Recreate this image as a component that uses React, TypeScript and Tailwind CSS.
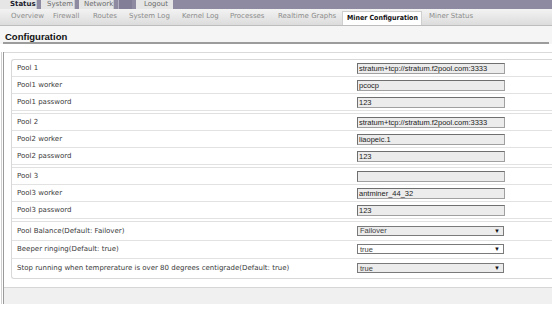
import React from "react";

const topTabs = [
  { label: "Status", cls: "w-[37px] pl-[10px] font-bold text-[#1d1d2e]" },
  { label: "System", cls: "w-[34px] pl-[6px] text-[#6b6b6b]" },
  { label: "Network", cls: "w-[35px] pl-[5px] text-[#6b6b6b]" },
];

const subTabs = [
  { label: "Overview", cls: "w-[42px]" },
  { label: "Firewall", cls: "w-[40px]" },
  { label: "Routes", cls: "w-[36px]" },
  { label: "System Log", cls: "w-[53px]" },
  { label: "Kernel Log", cls: "w-[48px]" },
  { label: "Processes", cls: "w-[48px]" },
  { label: "Realtime Graphs", cls: "w-[69px]" },
];

type Row = { label: string; value: string; kind: "input" | "select"; white?: boolean };

const groups: Row[][] = [
  [
    { label: "Pool 1", value: "stratum+tcp://stratum.f2pool.com:3333", kind: "input" },
    { label: "Pool1 worker", value: "pcocp", kind: "input" },
    { label: "Pool1 password", value: "123", kind: "input" },
  ],
  [
    { label: "Pool 2", value: "stratum+tcp://stratum.f2pool.com:3333", kind: "input" },
    { label: "Pool2 worker", value: "liaopeic.1", kind: "input" },
    { label: "Pool2 password", value: "123", kind: "input" },
  ],
  [
    { label: "Pool 3", value: "", kind: "input" },
    { label: "Pool3 worker", value: "antminer_44_32", kind: "input" },
    { label: "Pool3 password", value: "123", kind: "input" },
  ],
  [
    { label: "Pool Balance(Default: Failover)", value: "Failover", kind: "select" },
    { label: "Beeper ringing(Default: true)", value: "true", kind: "select", white: true },
    {
      label: "Stop running when temprerature is over 80 degrees centigrade(Default: true)",
      value: "true",
      kind: "select",
    },
  ],
];

function Field({ row }: { row: Row }) {
  if (row.kind === "input") {
    return (
      <input
        readOnly
        value={row.value}
        className="w-[148px] h-[11px] p-0 pl-[1px] border border-[#6f6f6f] border-b-[#a0a0a0] border-r-[#a0a0a0] bg-[#ececec] text-[7.5px] leading-[9px] text-[#222] font-['Liberation_Sans',Arial,sans-serif] outline-none"
      />
    );
  }
  return (
    <div
      className={`w-[147px] h-[10px] flex items-center justify-between border border-[#7a7a7a] pl-[2px] pr-[3px] text-[7.5px] leading-none text-[#444] font-['Liberation_Sans',Arial,sans-serif] ${
        row.white ? "bg-white" : "bg-[#ececec]"
      }`}
    >
      <span>{row.value}</span>
      <span className="text-[6px] text-[#111]">▼</span>
    </div>
  );
}

export default function App() {
  return (
    <div className="w-[552px] h-[316px] overflow-hidden bg-white font-['DejaVu_Sans',Verdana,sans-serif] text-[7px]">
      {/* top menu */}
      <div className="h-[9px] bg-[#8e8aa2] flex items-start overflow-hidden">
        {topTabs.map((t) => (
          <div
            key={t.label}
            className={`h-[9px] mr-[4px] bg-[#e6e6e6] border-r border-[#c9c9c9] leading-[8px] text-[7px] ${t.cls}`}
          >
            {t.label}
          </div>
        ))}
        <div className="h-[9px] w-[14px] bg-[#827e98] border-l border-[#b3b0c2]" />
        <div className="h-[9px] w-[37px] ml-[4px] pl-[8px] bg-[#e6e6e6] leading-[8px] text-[7px] text-[#6b6b6b]">
          Logout
        </div>
      </div>

      {/* sub menu */}
      <div className="h-[17px] bg-gradient-to-b from-[#f3f3f3] to-[#dcdcdc] border-b border-[#bdbdbd] flex items-end pl-[6px] text-[#8c8c8c]">
        {subTabs.map((t) => (
          <div key={t.label} className={`h-[16px] pl-[5px] leading-[15px] whitespace-nowrap ${t.cls}`}>
            {t.label}
          </div>
        ))}
        <div className="h-[14px] w-[80px] pl-[4px] bg-white border-x border-t border-[#cfcfcf] leading-[13px] font-bold text-[#111] whitespace-nowrap font-['DejaVu_Sans_Condensed','DejaVu_Sans',sans-serif]">
          Miner Configuration
        </div>
        <div className="h-[16px] pl-[7px] leading-[15px] whitespace-nowrap">Miner Status</div>
      </div>

      {/* heading */}
      <div className="bg-[#f5f5f5] pt-[6px] px-[3px]">
        <div className="border-b-2 border-[#9c9c9c] pl-[2px] h-[12px] leading-[10px] text-[9.5px] font-bold text-[#111] font-['Liberation_Sans',Arial,sans-serif]">
          Configuration
        </div>
      </div>

      {/* content */}
      <div className="mt-[8px] ml-[1px] border-l border-[#cfcfcf] pl-[1px]">
        <div className="border-l border-[#9a9a9a]">
          <div className="border-t border-[#dadada] pt-[6px] pl-[7px] pb-[8px]">
            <div className="border border-r-0 border-[#d8d8d8] rounded-l-[3px] text-[#3a3a3a]">
              {groups.map((g, gi) => (
                <div
                  key={gi}
                  className={gi === 0 ? "" : "mt-[2px] border-t border-[#e0e0e0]"}
                >
                  {g.map((r, ri) => (
                    <div
                      key={r.label}
                      className={`flex items-center pl-[5px] ${
                        gi === 3 ? "h-[18.5px]" : "h-[17px]"
                      } ${gi === 3 && ri === 2 ? "" : "border-b border-[#e2e2e2]"}`}
                    >
                      <div className="w-[340px] whitespace-nowrap">{r.label}</div>
                      <Field row={r} />
                    </div>
                  ))}
                </div>
              ))}
            </div>
          </div>
          <div className="h-[17px] bg-[#f0f0f0] border-t border-[#d6d6d6]" />
        </div>
      </div>
    </div>
  );
}
